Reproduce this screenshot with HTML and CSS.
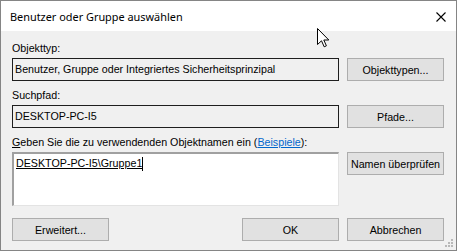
FILE: index.html
```html
<!DOCTYPE html>
<html lang="de">
<head>
    <meta charset="UTF-8">
    <title>Benutzer oder Gruppe auswählen</title>
    <link rel="stylesheet" href="styles.css">
</head>
<body>
    <div class="window">
        <div class="titlebar">
            <span class="title">Benutzer oder Gruppe auswählen</span>
            <svg class="close" width="10" height="10" viewBox="0 0 10 10">
                <path d="M0.5 0.5 L9.5 9.5 M9.5 0.5 L0.5 9.5" stroke="#000" stroke-width="1.1" fill="none"/>
            </svg>
        </div>

        <div class="content">
            <p class="label first">Objekttyp:</p>
            <div class="row">
                <div class="field">Benutzer, Gruppe oder Integriertes Sicherheitsprinzipal</div>
                <button class="button">Objekttypen...</button>
            </div>

            <p class="label">Suchpfad:</p>
            <div class="row">
                <div class="field">DESKTOP-PC-I5</div>
                <button class="button">Pfade...</button>
            </div>

            <p class="label"><u>G</u>eben Sie die zu verwendenden Objektnamen ein (<a class="link" href="#">Beispiele</a>):</p>
            <div class="row top">
                <div class="names"><span class="entry">DESKTOP-PC-I5\Gruppe1</span><span class="caret"></span></div>
                <button class="button">Namen überprüfen</button>
            </div>

            <div class="footer">
                <button class="button">Erweitert...</button>
                <div class="spacer"></div>
                <button class="button">OK</button>
                <button class="button">Abbrechen</button>
            </div>
        </div>

        <!-- size grip -->
        <svg class="grip" width="8" height="8" viewBox="0 0 8 8">
            <rect x="6" y="0" width="2" height="2" fill="#b8b8b8"/>
            <rect x="3" y="3" width="2" height="2" fill="#b8b8b8"/>
            <rect x="6" y="3" width="2" height="2" fill="#b8b8b8"/>
            <rect x="0" y="6" width="2" height="2" fill="#b8b8b8"/>
            <rect x="3" y="6" width="2" height="2" fill="#b8b8b8"/>
            <rect x="6" y="6" width="2" height="2" fill="#b8b8b8"/>
        </svg>

        <!-- mouse pointer -->
        <svg class="pointer" width="13" height="20" viewBox="0 0 13 20">
            <path d="M0.5 0.5 L0.5 16.5 L4.5 12.8 L7.2 18.8 L9.4 17.8 L6.8 12 L11.8 12 Z" fill="#fff" stroke="#000" stroke-width="1" stroke-linejoin="miter"/>
        </svg>
    </div>
</body>
</html>
```

FILE: styles.css
```css
* {
    margin: 0;
    padding: 0;
    box-sizing: border-box;
}

body {
    font-family: 'Liberation Sans', Arial, sans-serif;
    font-size: 10.7px;
    color: #000;
    background: #f0f0f0;
}

.window {
    position: relative;
    width: 457px;
    height: 251px;
    border: 1px solid #858585;
    background: #f0f0f0;
    overflow: hidden;
}

.titlebar {
    display: flex;
    align-items: center;
    justify-content: space-between;
    height: 30px;
    padding: 0 10px 0 9px;
    background: #fff;
}

.title {
    font-family: 'Noto Sans', 'Open Sans', sans-serif;
    font-size: 10.9px;
    color: #000;
}

.close {
    display: block;
    margin-top: 1px;
}

.content {
    padding: 11px 11px 0 11px;
}

.label {
    height: 13px;
    line-height: 13px;
    margin: 8px 0 3px 0;
}

.label.first {
    margin-top: 0;
}

.link {
    color: #0066cc;
}

.row {
    display: flex;
    align-items: center;
    gap: 8px;
}

.row.top {
    align-items: flex-start;
}

.field {
    width: 327px;
    height: 23px;
    line-height: 21px;
    padding: 0 2px;
    border: 1px solid #1e1e1e;
    background: #f0f0f0;
    white-space: nowrap;
}

.names {
    display: flex;
    align-items: flex-start;
    width: 327px;
    height: 54px;
    padding: 3px 2px;
    background: #fff;
    border-style: solid;
    border-width: 2px 1px 1px 2px;
    border-color: #a0a0a0 #e3e3e3 #e3e3e3 #a0a0a0;
}

.entry {
    line-height: 13px;
    text-decoration: underline;
}

.caret {
    width: 1px;
    height: 14px;
    background: #000;
}

.button {
    width: 97px;
    height: 23px;
    font-family: inherit;
    font-size: 10.7px;
    color: #000;
    background: #e1e1e1;
    border: 1px solid #adadad;
}

.footer {
    display: flex;
    gap: 8px;
    margin-top: 12px;
}

.spacer {
    flex: 1;
}

.footer .button:last-child {
    margin-right: 1px;
}

.grip {
    position: absolute;
    right: 3px;
    bottom: 3px;
}

.pointer {
    position: absolute;
    left: 316px;
    top: 27px;
}
```
